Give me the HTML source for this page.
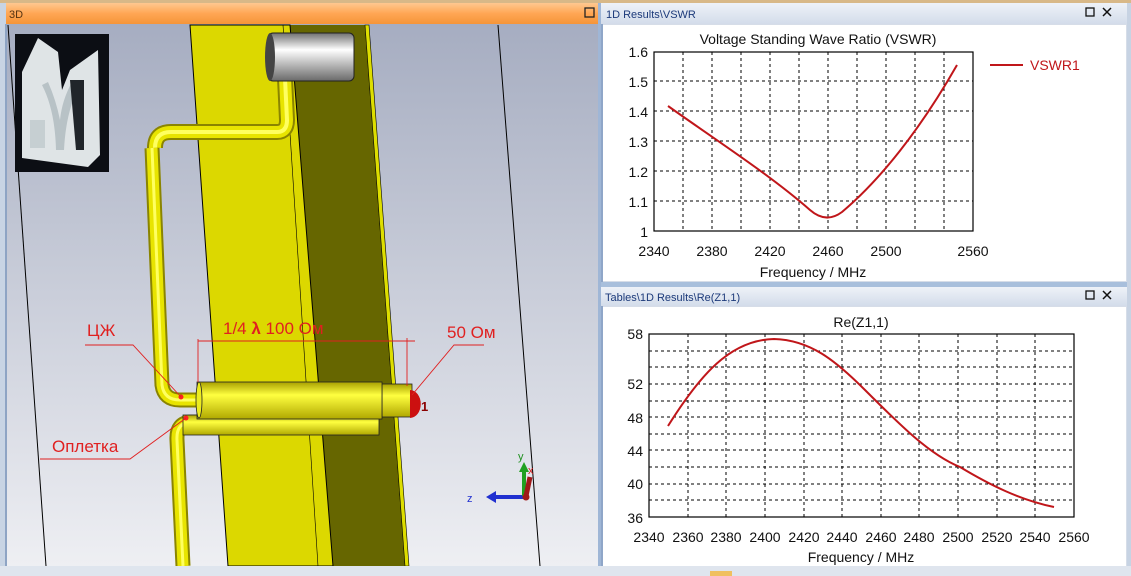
<!DOCTYPE html>
<html><head><meta charset="utf-8"><style>
html,body{margin:0;padding:0;width:1131px;height:576px;overflow:hidden;background:#d6dde8}
svg{display:block}
text{font-family:"Liberation Sans","Noto Sans CJK SC",sans-serif}
</style></head><body>
<svg width="1131" height="576" viewBox="0 0 1131 576" xmlns="http://www.w3.org/2000/svg">
<defs>
<linearGradient id="bg3d" x1="0" y1="0" x2="0" y2="1"><stop offset="0" stop-color="#a6adc1"/><stop offset="1" stop-color="#eeeff3"/></linearGradient>
<linearGradient id="orange" x1="0" y1="0" x2="0" y2="1"><stop offset="0" stop-color="#ffc890"/><stop offset="0.5" stop-color="#ffa654"/><stop offset="1" stop-color="#f59538"/></linearGradient>
<linearGradient id="blueT" x1="0" y1="0" x2="0" y2="1"><stop offset="0" stop-color="#eef2f8"/><stop offset="1" stop-color="#d3dcea"/></linearGradient>
<linearGradient id="cylG" x1="0" y1="0" x2="0" y2="1"><stop offset="0" stop-color="#707070"/><stop offset="0.35" stop-color="#ffffff"/><stop offset="1" stop-color="#6a6a6a"/></linearGradient>
<linearGradient id="pipeH" x1="0" y1="0" x2="0" y2="1"><stop offset="0" stop-color="#a8a000"/><stop offset="0.35" stop-color="#ffff40"/><stop offset="1" stop-color="#b0a800"/></linearGradient>
</defs>
<rect x="0" y="0" width="1131" height="576" fill="#d6dde8"/>
<rect x="0" y="0" width="1131" height="3" fill="#d8b888"/>
<!-- 3D panel -->
<rect x="6" y="3" width="592" height="21" fill="url(#orange)"/>
<text x="9" y="18" font-size="11" fill="#553311">3D</text>
<rect x="585" y="8" width="9" height="9" fill="none" stroke="#222" stroke-width="1.3"/>
<rect x="7" y="24" width="591" height="542" fill="url(#bg3d)"/>
<line x1="8" y1="25" x2="46" y2="566" stroke="#000" stroke-width="1"/>
<line x1="498" y1="25" x2="540" y2="566" stroke="#000" stroke-width="1"/>
<!-- plate -->
<polygon points="290,25 365,25 405,566 333,566" fill="#666600"/>
<polygon points="365,25 369,25 409,566 405,566" fill="#dede00" stroke="#000" stroke-width="0.6"/>
<polygon points="190,25 290,25 333,566 228,566" fill="#dcd800" stroke="#000" stroke-width="1"/>
<line x1="283" y1="25" x2="318" y2="566" stroke="#000" stroke-width="0.6"/>
<!-- upper pipe -->
<path d="M155,148 Q155,132 171,132 L277,132 Q287,132 287,120 L285,78" fill="none" stroke="#8a8400" stroke-width="16"/>
<path d="M155,148 Q155,132 171,132 L277,132 Q287,132 287,120 L285,78" fill="none" stroke="#e8e400" stroke-width="12"/>
<path d="M155,148 Q155,132 171,132 L277,132 Q287,132 287,120 L285,78" fill="none" stroke="#ffff60" stroke-width="4"/>
<path d="M152,148 L162,385 Q164,400 180,400 L198,400" fill="none" stroke="#8a8400" stroke-width="15"/>
<path d="M152,148 L162,385 Q164,400 180,400 L198,400" fill="none" stroke="#e8e400" stroke-width="11"/>
<path d="M152,148 L162,385 Q164,400 180,400 L198,400" fill="none" stroke="#ffff60" stroke-width="3"/>
<!-- gray cylinder -->
<rect x="268" y="33" width="86" height="48" rx="5" fill="url(#cylG)" stroke="#222" stroke-width="1"/>
<ellipse cx="270" cy="57" rx="5" ry="24" fill="#444"/>
<!-- lower pipe -->
<path d="M183,566 L177,440 Q176,422 192,422 L198,422" fill="none" stroke="#8a8400" stroke-width="15"/>
<path d="M183,566 L177,440 Q176,422 192,422 L198,422" fill="none" stroke="#e8e400" stroke-width="11"/>
<path d="M183,566 L177,440 Q176,422 192,422 L198,422" fill="none" stroke="#ffff60" stroke-width="3"/>
<!-- coax -->
<rect x="183" y="415" width="196" height="20" fill="url(#pipeH)" stroke="#222" stroke-width="0.8"/>
<rect x="382" y="384" width="30" height="33" fill="url(#pipeH)" stroke="#222" stroke-width="0.8"/>
<rect x="197" y="382" width="185" height="37" fill="url(#pipeH)" stroke="#222" stroke-width="0.8"/>
<ellipse cx="199" cy="400" rx="3" ry="18" fill="#ecec20" stroke="#222" stroke-width="0.8"/>
<path d="M410,390 A10,13 0 0 1 410,418 Z" fill="#cc1010"/>
<text x="421" y="411" font-size="13" font-weight="bold" fill="#8a0000">1</text>
<circle cx="181" cy="397" r="2.5" fill="#ff2020"/>
<circle cx="186" cy="418" r="2.5" fill="#ff2020"/>
<!-- annotations -->
<g fill="#e02020" font-size="17">
<text x="87" y="336">ЦЖ</text>
<text x="223" y="334">1/4 <tspan font-weight="bold">λ</tspan> 100 Ом</text>
<text x="447" y="338">50 Ом</text>
<text x="52" y="452">Оплетка</text>
</g>
<g stroke="#e02020" stroke-width="0.9" fill="none">
<polyline points="85,345 133,345 181,397"/>
<line x1="198" y1="341" x2="415" y2="341"/>
<line x1="198" y1="339" x2="198" y2="382"/>
<line x1="407" y1="338" x2="407" y2="386"/>
<polyline points="484,345 454,345 412,395"/>
<polyline points="40,459 130,459 186,418"/>
</g>
<!-- axes -->
<line x1="525" y1="497" x2="494" y2="497" stroke="#2030d0" stroke-width="4"/>
<polygon points="486,497 496,491 496,503" fill="#2030d0"/>
<line x1="524" y1="496" x2="524" y2="470" stroke="#20a020" stroke-width="4"/>
<polygon points="524,462 519,472 529,472" fill="#20a020"/>
<line x1="526" y1="496" x2="530" y2="477" stroke="#a01818" stroke-width="5"/>
<circle cx="526" cy="497" r="3.5" fill="#a01818"/>
<text x="467" y="502" font-size="11" fill="#2030d0">z</text>
<text x="518" y="460" font-size="11" fill="#209020">y</text>
<text x="528" y="474" font-size="11" fill="#d02020">x</text>
<!-- thumbnail -->
<rect x="15" y="34" width="94" height="138" fill="#0c0e14"/>
<path d="M22,72 L38,38 L58,52 L62,90 L70,70 L98,50 L100,155 L88,167 L22,158 Z" fill="#dfe4e6"/>
<path d="M42,85 Q55,110 56,150 L64,150 Q66,110 80,85 L72,82 Q62,100 60,120 Q56,100 48,82 Z" fill="#b8c2c6"/>
<path d="M70,80 L84,80 L84,150 L76,150 Z" fill="#20252a"/>
<path d="M30,120 L45,120 L45,148 L30,148 Z" fill="#c6cfd2"/>
<!-- left edge -->
<rect x="0" y="3" width="6" height="570" fill="#c8d4e4"/>
<rect x="5" y="24" width="2" height="542" fill="#8ea4c4"/>
<!-- right panels -->
<rect x="598" y="3" width="3" height="570" fill="#9fb6d6"/>
<rect x="1127" y="3" width="4" height="570" fill="#c7d3e3"/>
<!-- VSWR panel -->
<rect x="601" y="3" width="526" height="21" fill="url(#blueT)"/>
<text x="606" y="18" font-size="11" fill="#1c3a7a">1D Results\VSWR</text>
<rect x="1086" y="8" width="8" height="8" fill="none" stroke="#111" stroke-width="1.3"/>
<path d="M1103,8 L1111,16 M1111,8 L1103,16" stroke="#111" stroke-width="1.5"/>
<rect x="601" y="24" width="2" height="258" fill="#8fa6c8"/>
<rect x="603" y="25" width="523" height="256" fill="#fff"/>
<g font-size="14" fill="#111">
<text x="818" y="44" text-anchor="middle">Voltage Standing Wave Ratio (VSWR)</text>
<text x="648" y="57" text-anchor="end">1.6</text>
<text x="648" y="87" text-anchor="end">1.5</text>
<text x="648" y="117" text-anchor="end">1.4</text>
<text x="648" y="147" text-anchor="end">1.3</text>
<text x="648" y="177" text-anchor="end">1.2</text>
<text x="648" y="207" text-anchor="end">1.1</text>
<text x="648" y="237" text-anchor="end">1</text>
<text x="654" y="256" text-anchor="middle">2340</text>
<text x="712" y="256" text-anchor="middle">2380</text>
<text x="770" y="256" text-anchor="middle">2420</text>
<text x="828" y="256" text-anchor="middle">2460</text>
<text x="886" y="256" text-anchor="middle">2500</text>
<text x="973" y="256" text-anchor="middle">2560</text>
<text x="813" y="277" text-anchor="middle">Frequency / MHz</text>
</g>
<g stroke="#000" stroke-width="1" stroke-dasharray="3,3">
<line x1="683" y1="52" x2="683" y2="231"/><line x1="712" y1="52" x2="712" y2="231"/><line x1="741" y1="52" x2="741" y2="231"/><line x1="770" y1="52" x2="770" y2="231"/><line x1="799" y1="52" x2="799" y2="231"/><line x1="828" y1="52" x2="828" y2="231"/><line x1="857" y1="52" x2="857" y2="231"/><line x1="886" y1="52" x2="886" y2="231"/><line x1="915" y1="52" x2="915" y2="231"/><line x1="944" y1="52" x2="944" y2="231"/>
<line x1="654" y1="81" x2="973" y2="81"/><line x1="654" y1="111" x2="973" y2="111"/><line x1="654" y1="141" x2="973" y2="141"/><line x1="654" y1="171" x2="973" y2="171"/><line x1="654" y1="201" x2="973" y2="201"/>
</g>
<rect x="654" y="52" width="319" height="179" fill="none" stroke="#000" stroke-width="1.2"/>
<path d="M668,106 C720,143 770,175 810,210 Q826,224 842,212 C880,180 920,130 957,65" fill="none" stroke="#c0161a" stroke-width="2"/>
<line x1="990" y1="65" x2="1023" y2="65" stroke="#c0161a" stroke-width="2"/>
<text x="1030" y="70" font-size="14" fill="#c0161a">VSWR1</text>
<!-- Re panel -->
<rect x="601" y="282" width="526" height="5" fill="#a8bfdc"/>
<rect x="601" y="287" width="526" height="19" fill="url(#blueT)"/>
<text x="605" y="301" font-size="11" fill="#1c3a7a">Tables\1D Results\Re(Z1,1)</text>
<rect x="1086" y="291" width="8" height="8" fill="none" stroke="#111" stroke-width="1.3"/>
<path d="M1103,291 L1111,299 M1111,291 L1103,299" stroke="#111" stroke-width="1.5"/>
<rect x="601" y="306" width="2" height="260" fill="#8fa6c8"/>
<rect x="603" y="307" width="523" height="259" fill="#fff"/>
<g font-size="14" fill="#111">
<text x="861" y="327" text-anchor="middle">Re(Z1,1)</text>
<text x="643" y="339" text-anchor="end">58</text>
<text x="643" y="389" text-anchor="end">52</text>
<text x="643" y="423" text-anchor="end">48</text>
<text x="643" y="456" text-anchor="end">44</text>
<text x="643" y="489" text-anchor="end">40</text>
<text x="643" y="523" text-anchor="end">36</text>
<g text-anchor="middle">
<text x="649" y="542">2340</text><text x="688" y="542">2360</text><text x="726" y="542">2380</text><text x="765" y="542">2400</text><text x="804" y="542">2420</text><text x="842" y="542">2440</text><text x="881" y="542">2460</text><text x="919" y="542">2480</text><text x="958" y="542">2500</text><text x="997" y="542">2520</text><text x="1035" y="542">2540</text><text x="1074" y="542">2560</text>
</g>
<text x="861" y="562" text-anchor="middle">Frequency / MHz</text>
</g>
<g stroke="#000" stroke-width="1" stroke-dasharray="3,3">
<line x1="688" y1="334" x2="688" y2="517"/><line x1="726" y1="334" x2="726" y2="517"/><line x1="765" y1="334" x2="765" y2="517"/><line x1="804" y1="334" x2="804" y2="517"/><line x1="842" y1="334" x2="842" y2="517"/><line x1="881" y1="334" x2="881" y2="517"/><line x1="919" y1="334" x2="919" y2="517"/><line x1="958" y1="334" x2="958" y2="517"/><line x1="997" y1="334" x2="997" y2="517"/><line x1="1035" y1="334" x2="1035" y2="517"/>
<line x1="649" y1="351" x2="1074" y2="351"/><line x1="649" y1="367" x2="1074" y2="367"/><line x1="649" y1="384" x2="1074" y2="384"/><line x1="649" y1="401" x2="1074" y2="401"/><line x1="649" y1="417" x2="1074" y2="417"/><line x1="649" y1="434" x2="1074" y2="434"/><line x1="649" y1="450" x2="1074" y2="450"/><line x1="649" y1="467" x2="1074" y2="467"/><line x1="649" y1="484" x2="1074" y2="484"/><line x1="649" y1="500" x2="1074" y2="500"/>
</g>
<rect x="649" y="334" width="425" height="183" fill="none" stroke="#000" stroke-width="1.2"/>
<path d="M668,426 C700,375 730,340 774,339 C810,340 835,360 865,390 C900,425 930,455 960,467 C990,485 1020,500 1054,507" fill="none" stroke="#c0161a" stroke-width="2"/>
<!-- bottom strip -->
<rect x="0" y="566" width="1131" height="10" fill="#dfe5ee"/>
<rect x="710" y="571" width="22" height="5" fill="#f0c060"/>
</svg>
</body></html>
